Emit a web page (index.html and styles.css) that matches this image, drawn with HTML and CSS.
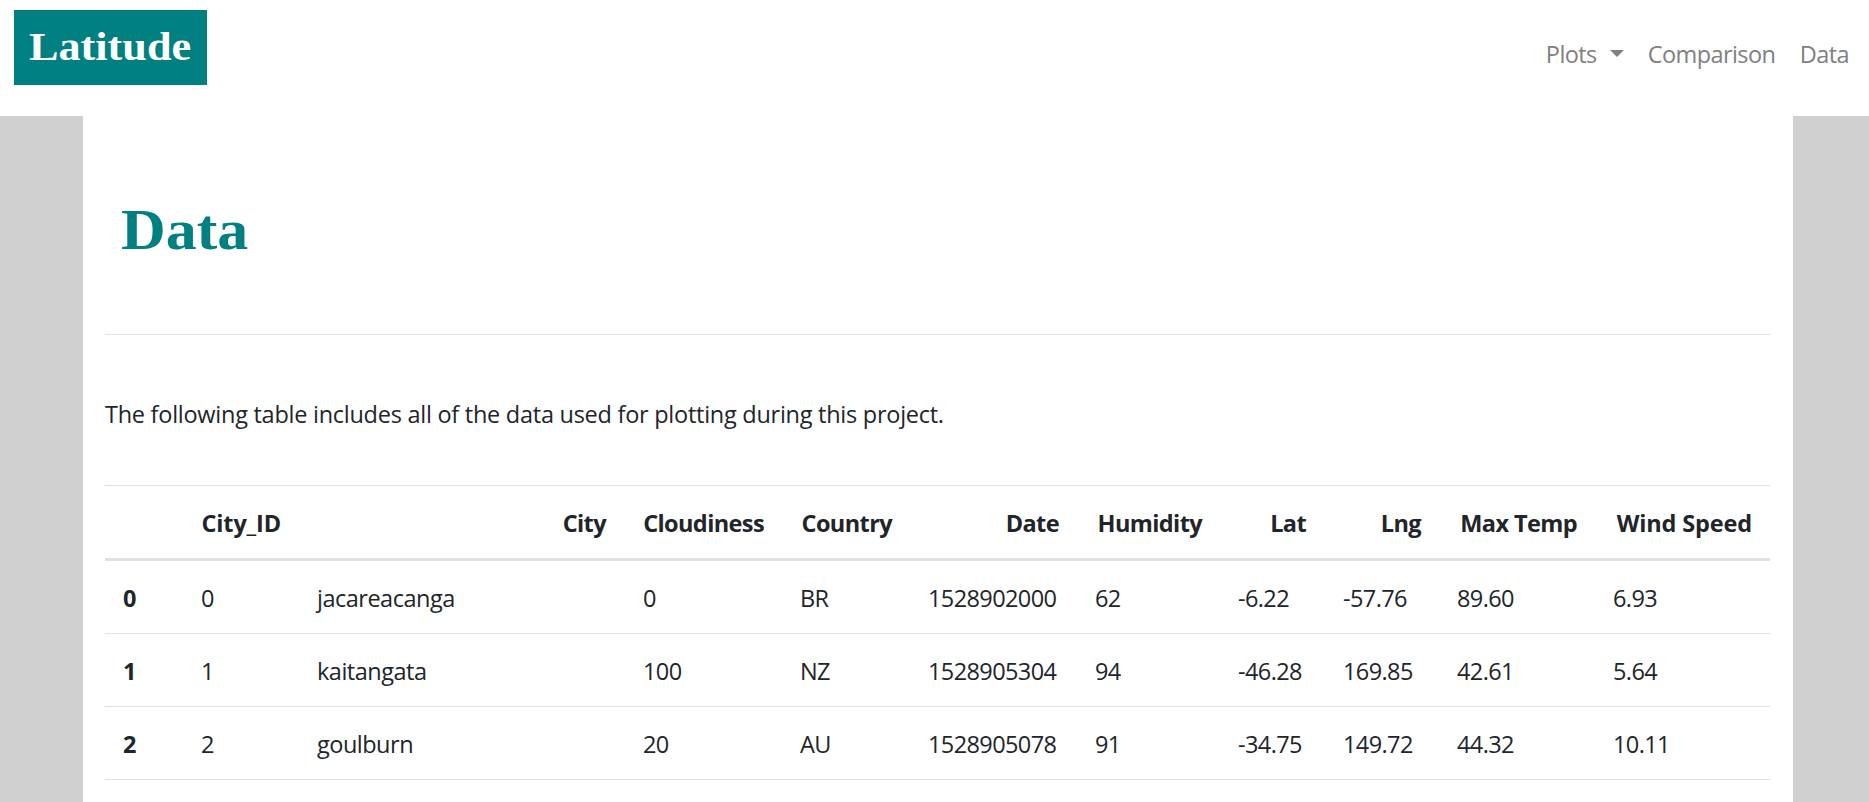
FILE: index.html
```html
<!DOCTYPE html>
<html lang="en">
<head>
<meta charset="utf-8">
<title>Latitude - Data</title>
<link rel="stylesheet" href="styles.css">
</head>
<body>
<nav class="navbar">
  <a class="brand"><span class="wide">Latitude</span></a>
  <div class="links">
    <a class="link plots">Plots<span class="caret"></span></a>
    <a class="link comparison">Comparison</a>
    <a class="link">Data</a>
  </div>
</nav>
<main class="container">
  <h1 class="title"><span class="wide">Data</span></h1>
  <hr class="rule">
  <p class="intro">The following table includes all of the data used for plotting during this project.</p>
  <table class="table">
    <colgroup><col class="c-index"><col class="c-id"><col class="c-city"><col class="c-cloud"><col class="c-country"><col class="c-date"><col class="c-hum"><col class="c-lat"><col class="c-lng"><col class="c-temp"><col class="c-wind"></colgroup>
    <thead>
      <tr><th></th><th class="id">City_ID</th><th class="city">City</th><th>Cloudiness</th><th>Country</th><th>Date</th><th>Humidity</th><th class="lat">Lat</th><th>Lng</th><th>Max Temp</th><th class="wind">Wind Speed</th></tr>
    </thead>
    <tbody>
      <tr><th>0</th><td>0</td><td class="name">jacareacanga</td><td>0</td><td>BR</td><td>1528902000</td><td>62</td><td>-6.22</td><td>-57.76</td><td>89.60</td><td>6.93</td></tr>
      <tr><th>1</th><td>1</td><td class="name">kaitangata</td><td>100</td><td>NZ</td><td>1528905304</td><td>94</td><td>-46.28</td><td>169.85</td><td>42.61</td><td>5.64</td></tr>
      <tr><th>2</th><td>2</td><td class="name">goulburn</td><td>20</td><td>AU</td><td>1528905078</td><td>91</td><td>-34.75</td><td>149.72</td><td>44.32</td><td>10.11</td></tr>
    </tbody>
  </table>
</main>
</body>
</html>
```
FILE: styles.css
```css
* { box-sizing: border-box; }
html { height: 100%; overflow: hidden; }
body {
  margin: 0;
  height: 100%;
  overflow: hidden;
  background: #d0d0d0;
  color: #212529;
  font: 23.5px/36px "Open Sans", "Noto Sans", sans-serif;
  letter-spacing: -0.6px;
}
.navbar {
  display: flex;
  justify-content: space-between;
  align-items: flex-start;
  height: 116px;
  padding: 10px 20px 0 14px;
  background: #fff;
}
.brand {
  width: 193px;
  height: 75px;
  padding: 10px 0 0 15px;
  background: #008080;
  color: #fff;
  font: bold 40px/54px "Liberation Serif", serif;
  letter-spacing: 0;
}
.wide { display: inline-block; transform: scaleX(1.105); transform-origin: 0 0; }
.links { display: flex; padding-top: 26px; color: #808080; }
.link { white-space: nowrap; }
.plots { width: 102px; }
.comparison { width: 152px; }
.caret {
  display: inline-block;
  margin-left: 13px;
  vertical-align: 6px;
  border: 7px solid transparent;
  border-top-color: #808080;
  border-bottom: 0;
}
.container {
  width: 1710px;
  height: 686px;
  margin-left: 83px;
  padding: 0 23px 0 22px;
  background: #fff;
}
.title {
  margin: 0;
  height: 218px;
  padding: 80px 0 0 16px;
  color: #008080;
  font: bold 56px/68px "Liberation Serif", serif;
  letter-spacing: 0;
}
.rule { margin: 0; border: 0; border-top: 1px solid #e0e1e1; }
.intro { margin: 0; padding: 61px 0 53px; white-space: nowrap; letter-spacing: -0.26px; }
.table { width: 1665px; table-layout: fixed; border-spacing: 0; border-bottom: 1px solid #dee2e6; }
.table th, .table td {
  height: 73px;
  padding: 19px 18px 17px;
  border-top: 1px solid #dee2e6;
  text-align: left;
  white-space: nowrap;
}
.table thead th { height: 76px; border-bottom: 3px solid #dee2e6; text-align: right; }
.table thead .id { letter-spacing: -0.15px; }
.table thead .city { padding-right: 19px; }
.table thead .lat { padding-right: 19px; }
.table thead .wind { letter-spacing: -0.15px; }
.table .name { letter-spacing: -0.5px; }
.table tbody tr:first-child > * { height: 72px; border-top: 0; }
.c-index { width: 78px; }
.c-id { width: 116px; }
.c-city { width: 326px; }
.c-cloud { width: 157px; }
.c-country { width: 128px; }
.c-date { width: 167px; }
.c-hum { width: 143px; }
.c-lat { width: 105px; }
.c-lng { width: 114px; }
.c-temp { width: 156px; }
.c-wind { width: 175px; }
```
